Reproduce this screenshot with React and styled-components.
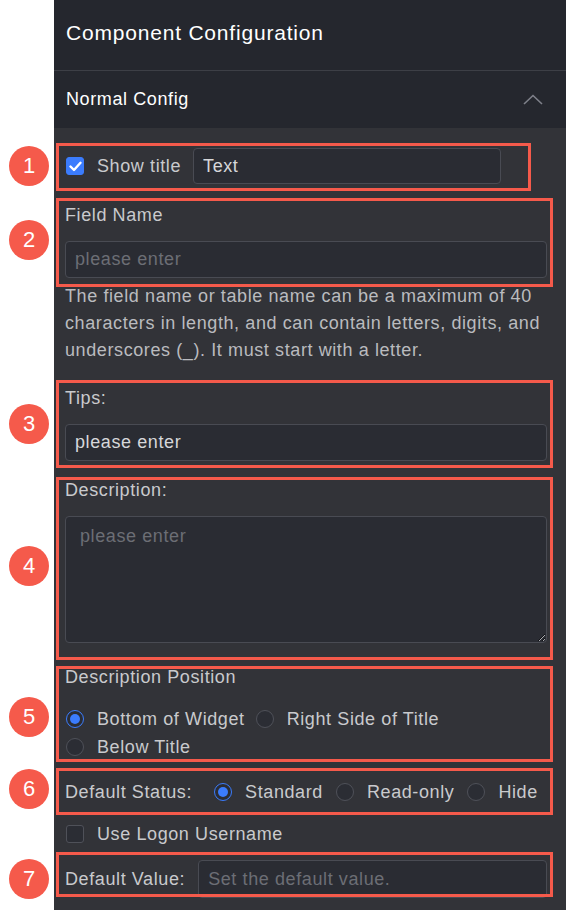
import React from "react";
import styled, { createGlobalStyle } from "styled-components";

const Global = createGlobalStyle`
  html, body { margin: 0; padding: 0; background: #ffffff; }
  body { font-family: "Liberation Sans", Arial, sans-serif; }
  * { box-sizing: border-box; }
`;

const Page = styled.div`
  display: flex;
  width: 566px;
  height: 910px;
  overflow: hidden;
  background: #ffffff;
`;

const Gutter = styled.div`
  width: 54px;
  flex: none;
`;

const Panel = styled.div`
  flex: 1;
  display: flex;
  flex-direction: column;
  background: #323338;
`;

const Header = styled.div`
  height: 71px;
  display: flex;
  align-items: center;
  padding: 0 12px 4px;
  background: #25272e;
  border-bottom: 1px solid #3d3f46;
  color: #ffffff;
  font-size: 21px;
  letter-spacing: 0.8px;
`;

const Section = styled.div`
  height: 57px;
  display: flex;
  align-items: center;
  justify-content: space-between;
  padding: 0 23px 0 12px;
  background: #25272e;
  color: #ffffff;
  font-size: 18px;
  letter-spacing: 0.6px;
`;

const Body = styled.div`
  display: flex;
  flex-direction: column;
  padding: 0 19px 0 11px;
  color: #c9cacd;
  font-size: 18px;
  letter-spacing: 0.6px;
`;

const Group = styled.div`
  position: relative;
  margin-top: ${(p) => p.$mt}px;
  display: flex;
  flex-direction: column;
`;

const Frame = styled.div`
  position: absolute;
  top: ${(p) => p.$t}px;
  bottom: ${(p) => p.$b}px;
  left: -9px;
  right: ${(p) => p.$r}px;
  border: 3px solid #f55a4b;
  pointer-events: none;
  z-index: 2;
`;

const Badge = styled.div`
  position: absolute;
  left: -50px;
  top: calc(50% - 20px + ${(p) => p.$dy}px);
  width: 40px;
  height: 40px;
  border-radius: 50%;
  background: #f55a4b;
  color: #ffffff;
  font-size: 22px;
  font-weight: 400;
  letter-spacing: 0;
  display: flex;
  align-items: center;
  justify-content: center;
`;

const Row = styled.div`
  display: flex;
  align-items: center;
  height: ${(p) => p.$h || 28}px;
`;

const Label = styled.div`
  line-height: 20px;
  height: 20px;
  margin-bottom: ${(p) => p.$mb ?? 16}px;
  color: #c9cacd;
  white-space: nowrap;
`;

const InlineLabel = styled.span`
  color: #c9cacd;
  white-space: nowrap;
  margin-right: ${(p) => p.$mr || 0}px;
`;

const TextInput = styled.input`
  display: block;
  width: ${(p) => (p.$w ? `${p.$w}px` : "100%")};
  flex: ${(p) => (p.$grow ? 1 : "none")};
  min-width: 0;
  height: ${(p) => p.$h || 37}px;
  background: #2a2c33;
  border: 1px solid #494b53;
  border-radius: 4px;
  padding: 0 9px;
  color: #d6d7da;
  font-family: "Liberation Sans", Arial, sans-serif;
  font-size: 18px;
  letter-spacing: 0.6px;
  outline: none;
  &::placeholder { color: #6c6e75; }
`;

const TextArea = styled.textarea`
  display: block;
  width: 100%;
  height: 127px;
  background: #2a2c33;
  border: 1px solid #494b53;
  border-radius: 4px;
  padding: 9px 14px;
  color: #d6d7da;
  font-family: "Liberation Sans", Arial, sans-serif;
  font-size: 18px;
  letter-spacing: 0.6px;
  line-height: 20px;
  outline: none;
  resize: vertical;
  color-scheme: dark;
  &::placeholder { color: #6c6e75; }
`;

const Help = styled.p`
  margin: 5px 0 0 0;
  line-height: 27px;
  color: #babbbf;
`;

const Box = styled.span`
  width: 18px;
  height: 18px;
  flex: none;
  border-radius: 3px;
  display: inline-flex;
  align-items: center;
  justify-content: center;
  background: ${(p) => (p.$on ? "#3b7cfd" : "#2b2d34")};
  border: 1px solid ${(p) => (p.$on ? "#3b7cfd" : "#4f5159")};
  margin: 0 13px 0 1px;
`;

const RadioDot = styled.span`
  width: 18px;
  height: 18px;
  flex: none;
  border-radius: 50%;
  display: inline-flex;
  align-items: center;
  justify-content: center;
  background: #2b2d34;
  border: 1px solid ${(p) => (p.$on ? "#3b7cfd" : "#4f5159")};
  margin: 0 13px 0 1px;
  &::after {
    content: "";
    width: 10px;
    height: 10px;
    border-radius: 50%;
    background: ${(p) => (p.$on ? "#3b7cfd" : "transparent")};
  }
`;

const Option = styled.span`
  display: inline-flex;
  align-items: center;
  margin-right: ${(p) => p.$mr || 0}px;
  color: #c9cacd;
  white-space: nowrap;
`;

function Checkbox({ on }) {
  return (
    <Box $on={on}>
      {on && (
        <svg width="13" height="11" viewBox="0 0 13 11">
          <path d="M1.5 5.5 L5 9 L11.5 1.8" fill="none" stroke="#fff" strokeWidth="2.4" strokeLinecap="round" strokeLinejoin="round" />
        </svg>
      )}
    </Box>
  );
}

function Radio({ on, label, mr }) {
  return (
    <Option $mr={mr}>
      <RadioDot $on={on} />
      {label}
    </Option>
  );
}

function Annot({ n, t, b, r = -6, dy = 0 }) {
  return (
    <Frame $t={t} $b={b} $r={r}>
      <Badge $dy={dy}>{n}</Badge>
    </Frame>
  );
}

export default function App() {
  return (
    <>
      <Global />
      <Page>
        <Gutter />
        <Panel>
          <Header>Component Configuration</Header>
          <Section>
            <span>Normal Config</span>
            <svg width="20" height="11" viewBox="0 0 20 11">
              <path d="M1 10 L10 1.5 L19 10" fill="none" stroke="#7f818a" strokeWidth="1.6" />
            </svg>
          </Section>
          <Body>
            <Group $mt={20}>
              <Row $h={36}>
                <Checkbox on />
                <InlineLabel $mr={12}>Show title</InlineLabel>
                <TextInput $w={308} $h={36} defaultValue="Text" />
              </Row>
              <Annot n={1} t={-5} b={-7} r={16} dy={-1} />
            </Group>

            <Group $mt={21}>
              <Label>Field Name</Label>
              <TextInput placeholder="please enter" />
              <Annot n={2} t={-7} b={-9} dy={-3} />
            </Group>

            <Help>
              The field name or table name can be a maximum of 40 characters in length, and can contain letters, digits, and underscores (_). It must start with a letter.
            </Help>

            <Group $mt={24}>
              <Label>Tips:</Label>
              <TextInput defaultValue="please enter" />
              <Annot n={3} t={-8} b={-7} />
            </Group>

            <Group $mt={19}>
              <Label $mb={16}>Description:</Label>
              <TextArea placeholder="please enter" />
              <Annot n={4} t={-3} b={-17} dy={-3} />
            </Group>

            <Group $mt={24}>
              <Label $mb={18}>Description Position</Label>
              <Row>
                <Radio on label="Bottom of Widget" mr={10} />
                <Radio label="Right Side of Title" />
              </Row>
              <Row>
                <Radio label="Below Title" />
              </Row>
              <Annot n={5} t={-1} b={-1} dy={3} />
            </Group>

            <Group $mt={17}>
              <Row>
                <InlineLabel $mr={21}>Default Status:</InlineLabel>
                <Radio on label="Standard" mr={12} />
                <Radio label="Read-only" mr={12} />
                <Radio label="Hide" />
              </Row>
              <Annot n={6} t={-10} b={-9} dy={-3} />
            </Group>

            <Group $mt={14}>
              <Row>
                <Checkbox />
                <InlineLabel>Use Logon Username</InlineLabel>
              </Row>
            </Group>

            <Group $mt={12}>
              <Row $h={38}>
                <InlineLabel $mr={13}>Default Value:</InlineLabel>
                <TextInput $grow $h={38} placeholder="Set the default value." />
              </Row>
              <Annot n={7} t={-8} b={1} dy={4} />
            </Group>
          </Body>
        </Panel>
      </Page>
    </>
  );
}
